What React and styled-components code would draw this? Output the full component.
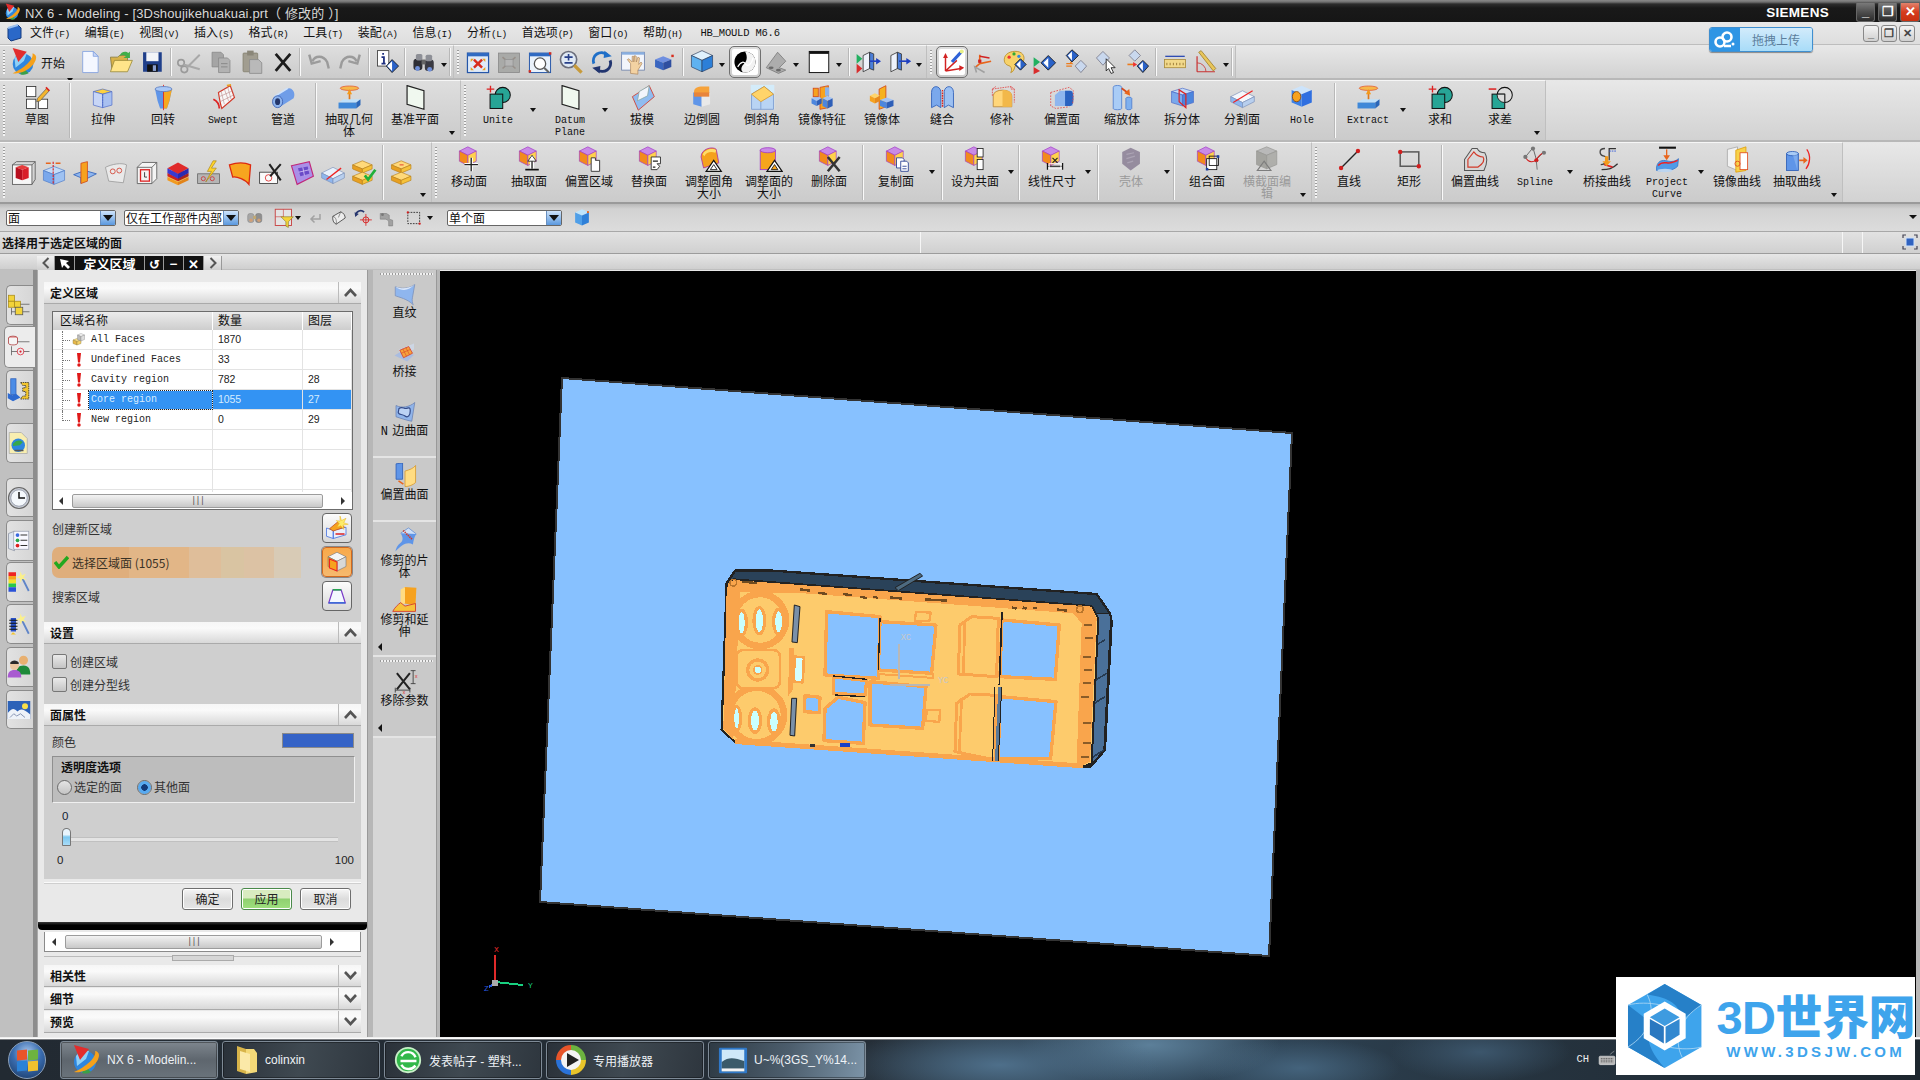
import React from "react";
import styled, { createGlobalStyle } from "styled-components";

const CJK = `"Noto Sans CJK SC", "Liberation Sans", sans-serif`;
const MONO = `"Liberation Mono", "Noto Sans CJK SC", monospace`;

const GlobalStyle = createGlobalStyle`
  html, body { margin: 0; padding: 0; background: #000; overflow: hidden; }
  * { box-sizing: border-box; }
`;

/* little isometric box used by most CAD icons */
const box = (x, y, w, h, d, t, l, r, st = "none") => (
  <g stroke={st} strokeWidth="0.8">
    <polygon points={`${x},${y} ${x + w},${y + d} ${x},${y + 2 * d} ${x - w},${y + d}`} fill={t} />
    <polygon points={`${x - w},${y + d} ${x},${y + 2 * d} ${x},${y + 2 * d + h} ${x - w},${y + d + h}`} fill={l} />
    <polygon points={`${x + w},${y + d} ${x},${y + 2 * d} ${x},${y + 2 * d + h} ${x + w},${y + d + h}`} fill={r} />
  </g>
);

const syncBase = box(14, 1, 10, 12, 5, "#c98be6", "#f28a1c", "#ffd24d", "#a33cc8");
const teal = "#27a596";

const icons = {
  nx: (<>
    <circle cx="16" cy="18" r="11" fill="#2e86de" />
    <path d="M7 12a11 11 0 0 1 13-5l-3 8-9 7z" fill="#8ed0f7" />
    <path d="M16 22l6 6a11 11 0 0 1-9 1z" fill="#3aa04a" />
    <path d="M5 28C16 30 30 20 30 11c0-2-2-4-4-4 2 6-9 16-21 21z" fill="#f5a11a" />
    <polygon points="5,1 20,5 11,16" fill="#e22d2d" />
  </>),
  doc: (<>
    <path d="M7 3h13l6 6v20H7z" fill="#f4f7ff" stroke="#7f9fe0" />
    <path d="M20 3v6h6z" fill="#c8d6f6" stroke="#7f9fe0" />
  </>),
  open: (<>
    <path d="M3 10h9l2-2h10v18H5z" fill="#d8b24a" stroke="#8a7a3a" />
    <path d="M3 28l5-14h22l-6 14z" fill="#ffe58a" stroke="#9a8a3a" />
    <path d="M14 9c2-6 8-7 11-4l2-2v8h-8l3-2c-2-2-5-2-8 0z" fill="#3fae4a" />
  </>),
  save: (<>
    <rect x="5" y="4" width="23" height="24" fill="#1f3f8a" />
    <rect x="9" y="4" width="15" height="11" fill="#f2f4f8" />
    <rect x="10" y="19" width="13" height="9" fill="#111" />
    <rect x="17" y="20" width="4" height="7" fill="#8aa0d0" />
  </>),
  cut: (<>
    <circle cx="9" cy="25" r="4" fill="none" stroke="#9a9a9a" strokeWidth="2" />
    <circle cx="5" cy="17" r="4" fill="none" stroke="#9a9a9a" strokeWidth="2" />
    <path d="M12 23L28 7M8 19l20 6" stroke="#a8a8a8" strokeWidth="2.5" />
  </>),
  copy: (<>
    <path d="M5 4h11l3 3v15H5z" fill="#a5a5a5" stroke="#8a8a8a" />
    <path d="M13 11h11l3 3v15H13z" fill="#b2b2b2" stroke="#8a8a8a" />
    <path d="M16 18h8M16 22h8" stroke="#808080" />
  </>),
  paste: (<>
    <rect x="5" y="5" width="18" height="23" rx="1" fill="#a19d90" stroke="#84806f" />
    <rect x="10" y="2" width="8" height="6" fill="#8a8678" />
    <path d="M13 13h11l4 4v13H13z" fill="#b9b9b9" stroke="#8a8a8a" />
  </>),
  del: <path d="M7 6l18 21M25 6L7 27" stroke="#1c1c1c" strokeWidth="3.4" fill="none" />,
  undo: <path d="M8 15C11 8 21 7 26 16l2 8M4 7l3 11 11-3" stroke="#9b9b9b" strokeWidth="3" fill="none" />,
  redo: <path d="M24 15C21 8 11 7 6 16l-2 8M28 7l-3 11-11-3" stroke="#9b9b9b" strokeWidth="3" fill="none" />,
  info: (<>
    <rect x="3" y="2" width="14" height="19" fill="#fff" stroke="#333" />
    <path d="M10 5v2M8 10h3v8M8 18h5" stroke="#1e2f80" strokeWidth="2.2" fill="none" />
    <polygon points="21,13 29,21 21,29 14,21" fill="#2a62c8" stroke="#111" />
    <polygon points="21,15 21,27 15,21" fill="#fff" />
  </>),
  bino: (<>
    <rect x="3" y="12" width="11" height="14" rx="4" fill="#2e2e34" />
    <rect x="17" y="13" width="11" height="14" rx="4" fill="#3a3a42" />
    <rect x="6" y="6" width="8" height="8" rx="2" fill="#8d8f96" />
    <rect x="18" y="7" width="8" height="8" rx="2" fill="#8d8f96" />
    <rect x="13" y="13" width="5" height="6" fill="#666" />
    <circle cx="8" cy="24" r="3" fill="#6f8fd8" /><circle cx="23" cy="25" r="3" fill="#6f8fd8" />
  </>),
  fit: (<>
    <rect x="3" y="5" width="26" height="24" fill="#dfeaf8" stroke="#2556a8" strokeWidth="1.5" />
    <rect x="3" y="5" width="26" height="4" fill="#2f6ac2" />
    <path d="M11 13l10 10M21 13L11 23" stroke="#d82c1c" strokeWidth="3" />
    <path d="M7 12l4 0-4 4zM25 12l-4 0 4 4zM7 26l4 0-4-4zM25 26l-4 0 4-4z" fill="#e8a021" />
  </>),
  fitGray: (<>
    <rect x="3" y="5" width="26" height="24" fill="#a9aaa8" stroke="#8a8a8a" />
    <path d="M8 10l16 14M24 10L8 24" stroke="#98908a" strokeWidth="2" />
    <rect x="11" y="13" width="10" height="8" fill="#b5b5b5" stroke="#949494" />
  </>),
  zoomWin: (<>
    <rect x="3" y="5" width="26" height="24" fill="#eaf2fb" stroke="#2556a8" strokeWidth="1.2" />
    <rect x="3" y="5" width="26" height="4" fill="#2f6ac2" />
    <circle cx="16" cy="18" r="7" fill="#fff" stroke="#555" strokeWidth="1.6" />
    <path d="M21 23l6 6" stroke="#666" strokeWidth="2.5" />
    <rect x="2" y="26" width="3" height="3" fill="#d82c1c" /><rect x="27" y="4" width="3" height="3" fill="#d82c1c" />
  </>),
  zoom: (<>
    <circle cx="13" cy="13" r="10" fill="#dfe9f5" stroke="#6c6f7c" strokeWidth="2" />
    <path d="M8 10h10M13 6v8M8 17h10" stroke="#28408a" strokeWidth="2" />
    <path d="M20 20l9 9" stroke="#c79a3a" strokeWidth="4" />
  </>),
  rot: (<>
    <path d="M6 18A10 10 0 0 1 22 7" stroke="#1f6fc8" strokeWidth="3.6" fill="none" />
    <path d="M26 14A10 10 0 0 1 10 25" stroke="#22356f" strokeWidth="3.6" fill="none" />
    <polygon points="19,2 28,9 18,11" fill="#1f6fc8" /><polygon points="13,30 4,23 14,21" fill="#22356f" />
  </>),
  pan: (<>
    <rect x="2" y="4" width="28" height="22" fill="#f2f5fb" stroke="#6a7ea8" />
    <rect x="2" y="4" width="28" height="3" fill="#88aee0" />
    <path d="M13 30V18l-4-5 2-1 4 4V9h2v7l1-8 2 1v7l2-6 2 1-1 8 3-3 1 2-5 8v5z" fill="#f3d2a2" stroke="#a9825a" strokeWidth=".8" />
  </>),
  viewCam: (<>
    {box(15, 9, 10, 9, 4, "#6f8fe0", "#3a66c0", "#2f4fa0")}
    <rect x="25" y="7" width="3" height="3" fill="#d82c1c" />
  </>),
  viewCube: box(16, 2, 13, 14, 6, "#dff1fd", "#5fb2f0", "#2c7fd8", "#2a3a5a"),
  shaded: (<>
    <circle cx="16" cy="16" r="13" fill="#000" />
    <path d="M16 3a13 13 0 0 1 0 26c-5 0-6-6-2-10 4-3 6-9 2-16z" fill="#f2f2f2" />
    <path d="M7 22c4-7 8-7 10-3 3 3 7 0 9-8" stroke="#fff" strokeWidth="1.5" fill="none" />
  </>),
  bracket: (<>
    <path d="M4 23L18 4l10 11-8 8 8 3-9 4z" fill="#adadad" stroke="#7a7a7a" />
    <ellipse cx="19" cy="26" rx="3" ry="1.6" fill="#6a6a6a" /><ellipse cx="10" cy="23" rx="3" ry="1.6" fill="#6a6a6a" />
  </>),
  white: (<>
    <rect x="4" y="3" width="24" height="26" fill="#fff" stroke="#111" strokeWidth="1.2" />
    <rect x="4" y="3" width="24" height="3" fill="#111" />
  </>),
  sideA: (<>
    <path d="M10 8l8-4v20l-8 4z" fill="#eef2fb" stroke="#333" /><path d="M18 4l5 2v20l-5-2z" fill="#4b7ed8" stroke="#333" />
    <polygon points="2,6 9,12 2,18" fill="#22b060" /><polygon points="2,18 9,24 2,30" fill="#d82c2c" />
    <path d="M18 15h9" stroke="#2040c0" strokeWidth="2" /><polygon points="26,11 32,15 26,19" fill="#2040c0" />
  </>),
  sideB: (<>
    <path d="M6 8l8-4v20l-8 4z" fill="#eef2fb" stroke="#333" /><path d="M14 4l5 2v20l-5-2z" fill="#4b7ed8" stroke="#333" />
    <path d="M16 15h10" stroke="#2040c0" strokeWidth="2" /><polygon points="25,11 31,15 25,19" fill="#2040c0" />
  </>),
  wcs: (<>
    <path d="M8 27V10M8 27l19-3M8 27l14-13" stroke="#d22222" strokeWidth="1.8" fill="none" />
    <polygon points="5,11 8,5 11,11" fill="#d22222" /><polygon points="25,20 31,23 25,27" fill="#d22222" />
    <path d="M16 16L27 4" stroke="#2f62d8" strokeWidth="4" /><circle cx="28" cy="3" r="2.5" fill="#e8f08a" />
  </>),
  wcsB: (<>
    <path d="M12 18V7M12 18l14-3M12 18l-6 5" stroke="#e8651c" strokeWidth="2" fill="none" />
    <path d="M12 9l12 2" stroke="#d22222" strokeWidth="2" />
    <path d="M8 29l-2-7 12 7" stroke="#a0a0a0" strokeWidth="2" fill="none" />
    <rect x="10" y="13" width="4" height="4" fill="#d22222" />
  </>),
  palette: (<>
    <path d="M4 13C4 6 12 2 20 3s10 8 7 13-9 2-10 6-2 6-5 7c2-3 1-6-1-8-3-1-7-2-7-8z" fill="#f7d26a" stroke="#b68a22" />
    <circle cx="10" cy="10" r="2" fill="#e33" /><circle cx="16" cy="6" r="2" fill="#3a3" /><circle cx="22" cy="9" r="2" fill="#38d" />
    <polygon points="24,12 31,19 24,26 17,19" fill="#2a62c8" stroke="#111" /><polygon points="24,14 24,24 19,19" fill="#fff" />
  </>),
  wcsC: (<>
    <polygon points="2,10 10,16 2,22" fill="#22b060" /><polygon points="2,22 10,27 2,31" fill="#d82c2c" />
    <polygon points="20,8 29,17 20,26 11,17" fill="#2a62c8" stroke="#111" /><polygon points="20,11 20,23 14,17" fill="#fff" />
  </>),
  wcsD: (<>
    <polygon points="11,1 19,8 11,16 4,8" fill="#2a62c8" stroke="#111" /><polygon points="11,3 11,14 6,8" fill="#fff" />
    <polygon points="22,14 29,21 22,29 15,21" fill="#c9d8ee" stroke="#778" />
    <path d="M4 18h7l-2-2M4 21h7" stroke="#ec7b1c" strokeWidth="1.6" fill="none" />
  </>),
  wcsE: (<>
    <polygon points="11,3 19,11 11,20 3,11" fill="#c9d8ee" stroke="#778" />
    <path d="M15 12l0 15 3-3 3 6 3-1-3-6 5 0z" fill="#fff" stroke="#111" />
  </>),
  wcsF: (<>
    <polygon points="12,1 19,8 12,15 5,8" fill="#c9d8ee" stroke="#778" />
    <polygon points="22,14 29,21 22,29 15,21" fill="#2a62c8" stroke="#111" /><polygon points="22,16 22,27 17,21" fill="#fff" />
    <path d="M3 19h9" stroke="#ec7b1c" strokeWidth="2" /><polygon points="10,16 15,19 10,22" fill="#e33" />
  </>),
  ruler: (<>
    <rect x="3" y="13" width="26" height="10" fill="#f2d98a" stroke="#a98a3a" />
    <path d="M6 17v3M10 17v3M14 17v3M18 17v3M22 17v3M26 17v3" stroke="#8a6a2a" />
    <path d="M4 9h24" stroke="#2140b0" strokeWidth="1.5" />
  </>),
  angle: (<>
    <path d="M5 28V9M5 28h22" stroke="#c83232" strokeWidth="1.5" fill="none" />
    <path d="M5 17a11 11 0 0 1 11 11" stroke="#c83232" fill="none" />
    <path d="M7 4l3-2 18 22-3 3z" fill="#e8c65a" stroke="#a07f2a" />
  </>),
  sketch: (<>
    <rect x="3" y="3" width="11" height="12" fill="#fff" stroke="#333" /><rect x="3" y="18" width="11" height="11" fill="#fff" stroke="#333" />
    <rect x="17" y="18" width="11" height="11" fill="#fff" stroke="#333" />
    <path d="M16 17L27 5l3 3-11 12-4 1z" fill="#f4b52e" stroke="#555" strokeWidth=".8" />
    <path d="M26 4l4 4" stroke="#d22" strokeWidth="2" />
  </>),
  extrude: (<>
    {box(15, 6, 11, 16, 3, "#ffd23f", "#c8d6f6", "#a8c0f0", "#4a68c8")}
    <path d="M15 12v16" stroke="#4a68c8" strokeDasharray="2 1" />
  </>),
  revolve: (<>
    <path d="M6 6h20l-3 14-3 9h-8l-3-9z" fill="#5f95e8" />
    <path d="M16 6h10l-3 14-3 9h-4z" fill="#f6a81f" />
    <path d="M16 1v30" stroke="#d22" strokeWidth="1" />
    <ellipse cx="16" cy="6" rx="10" ry="3" fill="#a9c8f7" stroke="#5f7fc0" />
  </>),
  swept: (<>
    <path d="M10 10L24 2l5 14-15 13c-2-6-3-13-4-19z" fill="#f8f8f8" stroke="#d23a2a" strokeWidth="1.4" />
    <path d="M13 8l4 16M17 6l5 14M21 4l4 14M11 15l16-7M12 21l16-8" stroke="#b88" strokeWidth=".7" />
    <path d="M4 18c4 2 7 6 7 11" stroke="#d22" strokeWidth="2" fill="none" />
    <path d="M20 2l5-1" stroke="#e8a021" strokeWidth="2" />
  </>),
  tube: (<>
    <path d="M4 16L20 6a6 8 0 0 1 8 11L12 27z" fill="#6f9de8" />
    <path d="M5 15L21 5" stroke="#cfe2fb" strokeWidth="2" />
    <ellipse cx="9" cy="21" rx="6" ry="7" fill="#8fb5ee" stroke="#3a5fb0" />
    <ellipse cx="9" cy="21" rx="3" ry="4" fill="#24366a" />
  </>),
  extract: (<>
    <ellipse cx="16" cy="5" rx="11" ry="2.6" fill="#f6b84a" stroke="#e4623a" />
    <path d="M16 20V8" stroke="#e07a1c" strokeWidth="2" /><polygon points="13,12 16,6 19,12" fill="#f39a1c" />
    <polygon points="3,22 9,18 29,18 24,22" fill="#bfe0fa" />
    <polygon points="3,22 24,22 24,29 3,29" fill="#3f88d8" /><polygon points="24,22 29,18 29,25 24,29" fill="#2a66b8" />
  </>),
  datum: <polygon points="6,2 26,8 26,30 6,24" fill="#f0f8ef" stroke="#222" strokeWidth="1.4" />,
  unite: (<>
    <path d="M2 6h9M6.500 2v8" stroke="#d22" strokeWidth="1.6" />
    <circle cx="21" cy="13" r="9" fill={teal} stroke="#111" strokeWidth="1.2" />
    <rect x="6" y="12" width="15" height="17" fill={teal} stroke="#111" strokeWidth="1.2" />
  </>),
  subtract: (<>
    <path d="M2 6h9" stroke="#d22" strokeWidth="1.8" />
    <circle cx="21" cy="13" r="9" fill="#dcdcdc" stroke="#111" strokeWidth="1.2" />
    <rect x="6" y="12" width="15" height="17" fill={teal} stroke="#111" strokeWidth="1.2" />
    <path d="M12 13a9 9 0 0 0 9 9v-10h-9z" fill="#dcdcdc" stroke="#111" />
  </>),
  draft: (<>
    <path d="M4 15L24 2l6 13-19 16z" fill="#8fbcf0" stroke="#d23a2a" />
    <polygon points="12,9 24,2 22,14 10,20" fill="#f2f5fb" stroke="#8aa" />
  </>),
  blend: (<>
    <path d="M6 9c0-4 4-6 10-6h8v10H6z" fill="#f6a23a" />
    {box(15, 7, 10, 14, 3, "#f6a23a", "#5f95e8", "#e9e9e9")}
    <rect x="6" y="10" width="18" height="5" fill="#e8843a" />
  </>),
  chamfer: (<>
    <rect x="2" y="1" width="28" height="29" fill="#d4ecfa" />
    <polygon points="3,12 18,3 29,12 29,30 3,30" fill="#b9d4f4" stroke="#7a9ad0" />
    <polygon points="3,12 18,3 29,12 14,21" fill="#ffd46a" stroke="#d89a30" />
    <path d="M14 21v9" stroke="#7a9ad0" />
  </>),
  mirrorF: (<>
    <path d="M13 4l10-2v26l-10 2z" fill="#f6a21f" stroke="#d24a1a" />
    {box(9, 14, 6, 6, 3, "#a5c4f4", "#4c86de", "#2e5fb8")}
    {box(22, 14, 6, 9, 3, "#a5c4f4", "#4c86de", "#2e5fb8")}
    <rect x="5" y="5" width="6" height="10" fill="#f6a21f" stroke="#d24a1a" /><rect x="19" y="4" width="5" height="10" fill="#8ab2ec" />
  </>),
  mirrorB: (<>
    <path d="M12 6l8-4v25l-8 3z" fill="#f6b21f" stroke="#d24a1a" />
    {box(7, 11, 6, 6, 3, "#ffd46a", "#f6a21f", "#e88a1c")}
    {box(21, 16, 8, 7, 3, "#a5c4f4", "#4c86de", "#2e5fb8")}
  </>),
  sew: (<>
    <path d="M3 28V10c0-9 10-9 11-1v19l-5-3z" fill="#7aa8ec" stroke="#2e5fb8" />
    <path d="M29 28V10c0-9-10-9-11-1v19l5-3z" fill="#9cc0f2" stroke="#2e5fb8" />
    <path d="M16 7v20" stroke="#d22" strokeDasharray="2 1" strokeWidth="1.6" />
  </>),
  patch: (<>
    <path d="M5 27V14C5 5 27 5 27 14v13z" fill="#ffd67a" stroke="#b8863a" />
    <path d="M16 27V7c8 0 11 3 11 7v13z" fill="#f2b84a" />
    <path d="M4 6l22-3 4 3v16M4 6v8M8 3l-4 3M26 3v3l4 0" stroke="#e04a4a" strokeDasharray="2 1" fill="none" />
  </>),
  offsetF: (<>
    <path d="M7 13l6-5h15v18H7z" fill="#8fb6ee" stroke="none" />
    <path d="M19 8h6c3 0 4 4 4 9s-1 9-4 9h-6z" fill="#2a62c0" />
    <path d="M2 10l22-6 5 4-1 16M2 10l0 16 6 3 16-2" stroke="#e04a4a" strokeDasharray="2 1.500" fill="none" />
  </>),
  scale: (<>
    <path d="M5 4c0-3 10-3 10 0v25c0 2-10 2-10 0z" fill="#a9ccf6" stroke="#4f7fd0" />
    <path d="M20 17c0-2 7-2 7 0v12c0 2-7 2-7 0z" fill="#7fb0ef" stroke="#4f7fd0" />
    <path d="M15 5l8 6" stroke="#d64a1c" strokeWidth="2" /><polygon points="25,14 18,11 24,6" fill="#e8651c" />
  </>),
  splitB: (<>
    {box(16, 5, 13, 13, 4, "#c4dcf8", "#7aa8ec", "#4c86de", "#4a68c8")}
    <path d="M12 7v14l8 7V12z" fill="none" stroke="#d22" strokeWidth="1.4" />
  </>),
  splitF: (<>
    {box(16, 8, 14, 6, 7, "#f4f7fc", "#8fb6ee", "#b8cfee", "#7a8fb8")}
    <path d="M5 22L28 8" stroke="#e22" strokeWidth="1.4" />
  </>),
  hole: (<>
    {box(15, 2, 12, 15, 5, "#cde4fb", "#f4f8ff", "#2f6fe0")}
    <polygon points="3,7 15,12 15,27 3,22" fill="#3d80e4" />
    <ellipse cx="9" cy="15" rx="5" ry="6" fill="#f7a21f" stroke="#8a4a10" />
  </>),
  block: (<>
    <rect x="3" y="6" width="24" height="24" fill="#f6f6f6" stroke="#555" />
    <path d="M3 6l5-4h23v22l-4 6M27 6l4-4" fill="none" stroke="#555" />
    {box(15, 6, 8, 13, 3, "#e63b3b", "#b80f1f", "#d91f2a")}
  </>),
  blueX: (<>
    {box(16, 8, 13, 12, 5, "#c4dcf8", "#7aa8ec", "#9fc2f2", "#4a78c8")}
    <path d="M15 2v27" stroke="#d22" strokeWidth="1.4" strokeDasharray="3 1" />
    <path d="M6 4h6M24 4h-6" stroke="#e8651c" strokeWidth="1.6" />
  </>),
  cross: (<>
    <path d="M2 18l14-5 14 4-14 7z" fill="#8fb6ee" stroke="#2e5fb8" /><path d="M10 22v7l8-3v-4z" fill="#4c86de" />
    <path d="M11 4l8-2v24l-8 3z" fill="#f6a21f" stroke="#d24a1a" />
  </>),
  curveS: (<>
    <path d="M3 9c8-4 20-6 26-3l-4 22-18-2z" fill="#e9e9e9" stroke="#9a9a9a" />
    <circle cx="12" cy="14" r="3" fill="none" stroke="#d23a2a" /><circle cx="20" cy="13" r="3" fill="none" stroke="#d23a2a" />
  </>),
  frame: (<>
    <path d="M4 9l6-6h18v20l-6 6H4z" fill="#f4f4f4" stroke="#555" /><path d="M4 9h18v20M22 9l6-6" fill="none" stroke="#555" />
    <rect x="8" y="12" width="11" height="14" fill="none" stroke="#d22" strokeWidth="1.6" />
    <path d="M13 15v6h3" stroke="#222" fill="none" />
  </>),
  layers: (<>
    {box(16, 15, 13, 4, 6, "#f7c23a", "#f29a1f", "#e2841a")}
    {box(16, 10, 13, 4, 6, "#e84a3a", "#cc2222", "#a8241f")}
    {box(16, 3, 13, 6, 7, "#e02a2a", "#3a3ad0", "#2a2ab0")}
  </>),
  spark: (<>
    <rect x="2" y="17" width="27" height="12" fill="#b5b5b5" stroke="#666" />
    <circle cx="9" cy="23" r="2.500" fill="none" stroke="#c33" /><circle cx="20" cy="23" r="2.500" fill="none" stroke="#c33" />
    <polygon points="21,1 14,14 19,14 12,27 25,10 19,10 25,1" fill="#ffd42a" stroke="#a07a10" strokeWidth=".7" />
  </>),
  flag: <path d="M3 6C12 3 22 3 29 6l-2 24c-4-6-15-10-20-9z" fill="#f7a51f" stroke="#dd2a10" strokeWidth="1.6" />,
  trimX: (<>
    <rect x="2" y="15" width="22" height="14" fill="#fafafa" stroke="#333" />
    <circle cx="13" cy="22" r="4" fill="none" stroke="#d22" />
    <path d="M14 5l14 20M28 5L15 20" stroke="#222" strokeWidth="2.5" />
  </>),
  meshP: (<>
    <path d="M3 7l22-5 5 18-20 10z" fill="#a98fe8" stroke="#c0287a" strokeWidth="1.4" />
    <path d="M11 10l12-2 2 9-11 3z" fill="#6a4ac8" />
    <path d="M17 9l2 10M12 15l13-3" stroke="#d8c8f8" />
  </>),
  split2: (<>
    {box(16, 9, 14, 6, 7, "#e8f0fb", "#8fb6ee", "#b8cfee", "#7a8fb8")}
    <path d="M8 24L26 10" stroke="#e22" strokeWidth="1.6" />
  </>),
  stack: (<>
    {box(15, 1, 12, 5, 5, "#ffd97a", "#e8a021", "#f6c23a", "#b8801a")}
    {box(15, 15, 12, 5, 5, "#ffd97a", "#e8a021", "#f6c23a", "#b8801a")}
    <path d="M13 6h5" stroke="#d22" />
  </>),
  stackOk: (<>
    {box(14, 1, 12, 5, 5, "#ffd97a", "#e8a021", "#f6c23a", "#b8801a")}
    {box(14, 15, 12, 5, 5, "#ffd97a", "#e8a021", "#f6c23a", "#b8801a")}
    <path d="M17 19l4 5 9-12" stroke="#1fb03a" strokeWidth="3.4" fill="none" />
  </>),
  move: (<>{syncBase}<path d="M18 14v16M10 22h16" stroke="#fff" strokeWidth="4" /><path d="M18 14v16M10 22h16" stroke="#222" strokeWidth="1.6" /></>),
  pull: (<>{syncBase}<path d="M19 12v15" stroke="#fff" strokeWidth="5" /><path d="M19 12v15" stroke="#222" strokeWidth="1.6" /><polygon points="14,18 19,11 24,18" fill="#fff" stroke="#222" /><path d="M11 27h16v2H11z" fill="#111" /></>),
  offsetR: (<>{syncBase}<path d="M18 14h5v3h5v13H18z" fill="#fff" stroke="#222" /></>),
  replace: (<>{syncBase}<path d="M18 13h11v8h-4l3 3-3 4h-7z" fill="#fff" stroke="#222" /><path d="M20 18h6M20 25h3" stroke="#222" strokeWidth="1.6" /></>),
  resizeB: (<>
    <path d="M6 13C6 3 20 0 24 4l3 16-18 6z" fill="#f5a11c" stroke="#b1339f" />
    <path d="M8 10C10 4 20 2 24 5l-1 3C17 6 12 8 10 12z" fill="#ffdd6a" />
    <polygon points="21,17 30,30 12,30" fill="#fff" stroke="#111" strokeWidth="1.4" /><polygon points="21,22 25,28 17,28" fill="#fff" stroke="#111" />
  </>),
  resizeC: (<>
    <rect x="5" y="5" width="18" height="23" fill="#f6a51c" stroke="#a33cc8" />
    <ellipse cx="14" cy="5" rx="9" ry="3" fill="#c98be6" stroke="#a33cc8" />
    <polygon points="22,17 31,30 13,30" fill="#fff" stroke="#111" strokeWidth="1.4" /><polygon points="22,22 26,28 18,28" fill="#f6a51c" stroke="#111" />
  </>),
  delF: (<>{syncBase}<path d="M14 13l14 17M28 13L14 30" stroke="#333" strokeWidth="3" /></>),
  copyF: (<>{syncBase}<path d="M16 14h7l2 2v10h-9z" fill="#fff" stroke="#223a90" /><path d="M21 18h7l2 2v10h-9z" fill="#fff" stroke="#223a90" /><path d="M23 24h5M23 27h5" stroke="#223a90" /></>),
  copl: (<>{syncBase}<rect x="18" y="3" width="7" height="10" fill="#fff" stroke="#222" /><rect x="18" y="16" width="7" height="12" fill="#fff" stroke="#222" /></>),
  linDim: (<>{syncBase}<path d="M10 24h18M10 20v8M28 20v8" stroke="#111" strokeWidth="1.4" /><path d="M16 14l6 6M22 14l-6 6" stroke="#222" strokeWidth="1.4" /><rect x="12" y="21" width="14" height="6" fill="none" stroke="#fff" /></>),
  shell: (<>
    <polygon points="15,2 26,7 26,21 15,29 5,21 5,7" fill="#8a7f95" />
    <path d="M10 10l9-2M10 15l10-3M11 20l7-2" stroke="#a49bae" strokeWidth="1.4" />
  </>),
  combine: (<>{syncBase}<rect x="15" y="15" width="12" height="13" fill="#fff" stroke="#111" /><rect x="18" y="12" width="11" height="11" fill="none" stroke="#111" /><rect x="14" y="26" width="3" height="3" fill="#1e3fa0" /><rect x="27" y="11" width="3" height="3" fill="#1e3fa0" /></>),
  section: (<>
    {box(15, 1, 12, 16, 5, "#b4b4b4", "#9b9b96", "#a8a8a4", "#8a8a86")}
    <polygon points="12,18 20,29 4,29" fill="none" stroke="#6e6e6e" strokeWidth="1.4" />
  </>),
  line: (<>
    <path d="M6 26L26 6" stroke="#222" strokeWidth="1.6" />
    <circle cx="26" cy="6" r="2.600" fill="#d21e1e" /><circle cx="6" cy="26" r="2.600" fill="#d21e1e" />
  </>),
  rect: (<>
    <rect x="5" y="7" width="22" height="17" fill="none" stroke="#5a5a5a" strokeWidth="1.8" />
    <circle cx="5" cy="7" r="2.600" fill="#d21e1e" /><circle cx="27" cy="24" r="2.600" fill="#d21e1e" />
  </>),
  offC: (<>
    <path d="M3 16L12 3h6c2 4 6 5 9 5 3 5 3 13-1 21H3z" fill="none" stroke="#555" strokeWidth="1.2" />
    <path d="M7 16L14 7c3 4 7 6 11 6 2 3 1 7-6 12H7z" fill="none" stroke="#d23a2a" strokeWidth="1.4" />
  </>),
  spline: (<>
    <path d="M4 13L13 2l4 14 8-8" fill="none" stroke="#555" strokeWidth="1" />
    <path d="M4 13c4 8 11 6 13 3s5-7 9-8" fill="none" stroke="#d21e1e" strokeWidth="1.2" />
    <circle cx="4" cy="13" r="2.500" fill="#777" /><circle cx="13" cy="3" r="2.500" fill="#777" /><circle cx="17" cy="17" r="2.500" fill="#d21e1e" /><circle cx="26" cy="8" r="2.500" fill="#777" />
    <path d="M17 18l1 10" stroke="#666" strokeWidth="1" />
  </>),
  bridge: (<>
    <path d="M13 3c-8 0-7 8-1 9s3 10-4 10" fill="none" stroke="#444" strokeWidth="1.6" />
    <path d="M26 3h-8v14M9 28c8 0 13-1 19-7" stroke="#333" strokeWidth="1.5" fill="none" />
    <path d="M18 6h8" stroke="#2a52d8" strokeDasharray="2 1" />
    <path d="M12 22l10 3" stroke="#d22" strokeWidth="2" />
    <polygon points="13,12 17,12 17,18 20,18 15,24 10,18 13,18" fill="#f39a1c" />
  </>),
  project: (<>
    <path d="M6 2h20" stroke="#111" strokeWidth="2.500" />
    <path d="M15 4v9" stroke="#e8651c" strokeWidth="1.6" /><polygon points="11,11 19,11 15,17" fill="#e8651c" />
    <path d="M3 25c2-10 10-8 14-7s9 0 12-3l-1 9c-6 6-16 6-25 5z" fill="#4f9be8" stroke="#3a78c8" />
    <path d="M5 23c5-6 10-2 14-3s5-1 9-3" stroke="#e22" strokeWidth="1.8" fill="none" />
    <ellipse cx="13" cy="29" rx="9" ry="2" fill="#bcd5f0" />
  </>),
  mirrorC: (<>
    <path d="M4 4l12-3v28L4 24z" fill="#f2f2f2" stroke="#aaa" />
    <path d="M14 5l12-4v28l-12 2z" fill="#f8d24a" stroke="#e0a010" />
    <rect x="19" y="8" width="9" height="20" fill="#fff" stroke="#e04a1c" />
    <circle cx="16" cy="21" r="3" fill="none" stroke="#e04a1c" />
  </>),
  extC: (<>
    <rect x="3" y="9" width="14" height="20" fill="#5f95e8" stroke="#2e5fb8" />
    <ellipse cx="10" cy="9" rx="7" ry="2.500" fill="#a9ccf6" stroke="#2e5fb8" />
    <path d="M10 9h6v20" fill="#a9ccf6" opacity=".4" />
    <path d="M18 17h7" stroke="#e8651c" strokeWidth="2" /><polygon points="23,13 28,17 23,21" fill="#e8651c" />
    <path d="M27 4c5 7 4 17-1 23" stroke="#e22" strokeWidth="1.500" fill="none" />
  </>),
  cubeSel: (<>
    {box(16, 2, 11, 16, 5, "#bfe4fb", "#4f9fe8", "#2f80d8")}
    <rect x="24" y="5" width="3" height="3" fill="#e8651c" />
  </>),
  selGray: (<>
    <rect x="3" y="8" width="11" height="16" rx="4" fill="#a6a6a6" stroke="#8a8a8a" />
    <rect x="17" y="8" width="11" height="16" rx="4" fill="#8f8f8f" stroke="#7a7a7a" />
    <rect x="13" y="12" width="5" height="6" fill="#c2a870" />
    <circle cx="9" cy="20" r="3" fill="#d0a078" /><circle cx="23" cy="20" r="3" fill="#d0a078" />
  </>),
  filter: (<>
    <rect x="2" y="2" width="26" height="26" fill="#e4e4e4" stroke="#c84444" strokeWidth="1.5" />
    <path d="M15 2v12M2 14h14" stroke="#c84444" />
    <polygon points="11,14 31,14 23,22 23,31 19,29 19,22" fill="#f4d43a" stroke="#8a7a2a" />
  </>),
  selBack: <path d="M26 8v10H9M15 11l-7 7 7 7" stroke="#a2a2a2" strokeWidth="3" fill="none" />,
  selRoll: (<>
    <path d="M5 13L19 5c5 2 8 6 8 11L11 27C6 25 4 19 5 13z" fill="#ececec" stroke="#444" strokeWidth="1.5" />
    <path d="M5 13c6 1 7 9 6 14M19 5l-4 10" stroke="#444" fill="none" />
  </>),
  selCross: (<>
    <path d="M3 12c1-7 9-10 14-5" stroke="#27366e" strokeWidth="3" fill="none" />
    <polygon points="1,7 8,10 2,15" fill="#27366e" />
    <circle cx="20" cy="20" r="5" fill="none" stroke="#d62222" strokeWidth="1.6" />
    <path d="M20 10v20M10 20h20" stroke="#d62222" strokeWidth="1.4" />
  </>),
  selGrayPipe: (<>
    <path d="M4 8h11l5 3v7l6 2v10h-7V21l-5-3H4z" fill="#a2a2a2" stroke="#7a7a7a" />
    <circle cx="8" cy="10" r="2.500" fill="#777" />
  </>),
  rectSel: (<>
    <rect x="5" y="6" width="21" height="20" fill="none" stroke="#222" strokeWidth="1.500" strokeDasharray="3 2" />
    <circle cx="5" cy="6" r="2" fill="#d21e1e" /><circle cx="26" cy="26" r="2" fill="#d21e1e" />
  </>),
  tree1: (<>
    <rect x="2" y="3" width="8" height="8" fill="#f2d33a" stroke="#a88a1a" /><rect x="2" y="11" width="8" height="8" fill="#f2d33a" stroke="#a88a1a" /><rect x="10" y="11" width="8" height="8" fill="#f2d33a" stroke="#a88a1a" />
    <path d="M18 15h12M6 20v9" stroke="#555" />
    <rect x="11" y="19" width="10" height="10" fill="#f2d33a" stroke="#555" /><path d="M6 25h5M21 25h9" stroke="#555" />
  </>),
  tree2: (<>
    <ellipse cx="8" cy="4" rx="6" ry="2.500" fill="#e8a8a8" stroke="#a33" /><path d="M2 4v7c0 3 12 3 12 0V4" fill="#f4f4f4" stroke="#a33" />
    <path d="M14 9h16M6 15v12M6 22h8M22 22h8" stroke="#555" />
    <circle cx="18" cy="22" r="4.500" fill="none" stroke="#d23" /><circle cx="18" cy="22" r="1.500" fill="#d23" />
  </>),
  bolt: (<>
    <rect x="5" y="1" width="7" height="21" fill="#4c8ce6" stroke="#2e5fb8" />
    <path d="M1 20l6 3 5-2 6 5-10 5-7-4z" fill="#2e6ad0" />
    <path d="M18 6h11v22H18l3-4h4v-6h-4v-5h4V10h-4z" fill="#f2c52e" stroke="#222" strokeDasharray="2 1" />
  </>),
  webDoc: (<>
    <path d="M3 2h16l8 8v20H3z" fill="#f8eeb0" stroke="#a8a8a8" />
    <circle cx="15" cy="19" r="9" fill="#2e86de" /><path d="M8 17c4-5 10-6 13-2l-4 4-9 1z" fill="#38a84a" />
    <path d="M10 26h12" stroke="#555" strokeWidth="2" />
  </>),
  clock: (<>
    <circle cx="16" cy="16" r="14" fill="#c8ccd4" stroke="#666" strokeWidth="1.5" />
    <circle cx="16" cy="16" r="11" fill="#f4f8fc" stroke="#8a90a0" />
    <path d="M16 8v8h8" stroke="#111" strokeWidth="2" fill="none" />
  </>),
  checklist: (<>
    <path d="M2 6l8-3v26l-8-3z" fill="#dfe6f0" stroke="#8a90a0" />
    <rect x="9" y="3" width="20" height="24" fill="#f8f8ff" stroke="#9aa0b0" />
    <circle cx="14" cy="8" r="2.500" fill="#3a6ae0" /><circle cx="14" cy="15" r="2.500" fill="#2aa84a" /><circle cx="14" cy="22" r="2.500" fill="#d22" />
    <path d="M18 8h9M18 15h9M18 22h9" stroke="#333" strokeWidth="1.6" />
  </>),
  rainbow: (<>
    <rect x="2" y="3" width="10" height="5" fill="#e22" /><rect x="2" y="8" width="10" height="5" fill="#f6a21f" /><rect x="2" y="13" width="10" height="5" fill="#f2e22a" />
    <rect x="2" y="18" width="10" height="5" fill="#2ac84a" /><rect x="2" y="23" width="10" height="6" fill="#2a52d8" />
    <path d="M19 8l10 20" stroke="#5f85c8" strokeWidth="2.500" />
    <path d="M18 2l2 5 5-2-3 5 4 3-6-1-2 5-1-6-5-1 5-2z" fill="#fbf08a" />
  </>),
  wand: (<>
    <path d="M5 8h7v18H5z" fill="#2a52c8" /><path d="M3 11h11M3 15h11M3 19h11M3 23h11" stroke="#111" strokeWidth="1.4" />
    <path d="M8 27l4 3-7 0z" fill="#f2c52e" /><path d="M19 9l10 20" stroke="#5f85c8" strokeWidth="2.500" />
    <path d="M18 2l2 5 5-2-3 5 4 3-6-1-2 5-1-6-5-1 5-2z" fill="#fbf08a" />
  </>),
  users: (<>
    <circle cx="22" cy="7" r="6" fill="#e8b070" /><path d="M12 26c0-8 3-12 10-12s9 5 9 12z" fill="#1f8a3a" />
    <circle cx="10" cy="14" r="6" fill="#ecc7a0" /><path d="M4 11c2-5 10-5 12 0l-1 1H5z" fill="#2a2a2a" />
    <path d="M1 30c0-7 3-10 9-10s9 3 9 10z" fill="#a85ad0" />
  </>),
  land: (<>
    <rect x="1" y="4" width="30" height="24" fill="#2c62b8" />
    <circle cx="24" cy="11" r="4" fill="#f8e04a" />
    <path d="M1 28V20c6-8 9-6 13-2 4-4 8-4 17 4v6z" fill="#eef2f8" />
    <path d="M4 26l5-5 4 3 5-3 6 5" stroke="#6a7aa0" fill="none" />
  </>),
  ruled: (<>
    <path d="M3 5c8 3 18 3 26-3l-3 17c-1 4 0 8 1 10-8-8-19-10-24-12z" fill="#8fb6ee" stroke="#7a8fb8" />
    <path d="M3 5c8 3 18 3 26-3-8 8-16 10-26 3z" fill="#dbe7fa" />
  </>),
  bridgeS: (<>
    <path d="M8 10L28 2v8L8 19z" fill="#cdd6e4" /><path d="M2 18l8-5 18 4-9 9z" fill="#a9bce0" />
    <path d="M9 11l12-5 5 9-12 6z" fill="#f6a23a" stroke="#d23a2a" />
    <path d="M13 9l5 10M17 7l5 10M11 15l12-5" stroke="#d23a2a" strokeWidth=".7" />
  </>),
  nsided: (<>
    <path d="M4 6c8 4 18 2 25-4l-4 25c-6-1-15-4-21-6z" fill="#90b4ea" stroke="#6a80b0" />
    <path d="M8 10c4-3 6 0 9 0s6-3 6 3-3 10-7 7-9-1-9-5z" fill="#bcd2f4" stroke="#334a88" strokeWidth="1.6" />
  </>),
  offS: (<>
    <path d="M5 1l8-1v20H5z" fill="#5f95e8" stroke="#2e5fb8" />
    <path d="M16 10c6-2 10-3 13-7v21c-3 3-8 5-13 5z" fill="#ffdc82" stroke="#d89a30" />
    <path d="M8 22l6 4" stroke="#e8651c" strokeWidth="2" />
  </>),
  trimS: (<>
    <path d="M5 28c7-8 14-12 20-8 1-6 2-10 4-12l-9-7-9 6c3 5 3 8 0 11-4 3-5 6-6 10z" fill="#5f95e8" />
    <path d="M11 7l9-6 9 7" fill="#cfe0f7" stroke="#7a9ad0" />
    <path d="M14 4l10 10" stroke="#d23a2a" strokeDasharray="1.500 1" strokeWidth="2" />
  </>),
  trimE: (<>
    <polygon points="15,1 29,2 28,22 15,20" fill="#f6a21f" />
    <polygon points="11,4 16,1 16,20 11,22" fill="#ffdc82" />
    <path d="M2 29c2-4 6-8 9-10l5 4 12-3v9z" fill="#f7c23a" stroke="#d23a2a" />
  </>),
  removeP: (<>
    <path d="M6 5l16 20M22 5L6 25" stroke="#222" strokeWidth="2.500" />
    <path d="M26 2v16M23 2h6M23 18h6M4 26h18M4 23v6M22 23v6" stroke="#333" />
    <text x="28" y="11" fontSize="6" fill="#d22" fontFamily="Liberation Mono">x</text>
    <text x="13" y="31" fontSize="6" fill="#d22" fontFamily="Liberation Mono">x</text>
  </>),
  newRegion: (<>
    <path d="M2 16l9 3v11l-9-3zM11 19l17-4v10l-17 5z" fill="#eaf0fa" stroke="#3a6ae0" />
    <path d="M6 17l12-10 8 8-15 5z" fill="#f6a21f" stroke="#c24a1c" />
    <path d="M20 0l2 6 6-3-3 6 6 2-7 1 1 6-4-5-5 2 3-5-4-4 5 1z" fill="#fdeb6a" stroke="#e8b010" strokeWidth=".6" />
    <path d="M14 24h12" stroke="#d22" strokeWidth="2" />
  </>),
  regionFace: (<>
    {box(16, 3, 12, 13, 6, "#f4f4f4", "#f6a21f", "#d8d8d8", "#777")}
    <polygon points="6,12 16,16 16,28 6,24" fill="#f6a21f" stroke="#e22" strokeWidth="1.400" />
  </>),
  trapez: (<>
    <polygon points="10,7 22,7 28,26 4,26" fill="#f4f8ff" stroke="#7a3ac8" strokeWidth="1.800" />
    <path d="M10 7h12" stroke="#22a84a" strokeWidth="2.200" /><path d="M4 26h24" stroke="#2a6ad8" strokeWidth="2" />
  </>),
  exclaim: (<>
    <path d="M12 2h8l-2 19h-4z" fill="#e01818" /><circle cx="16" cy="26" r="3.500" fill="#e01818" />
  </>),
  allF: (<>
    {box(12, 13, 8, 7, 3, "#ffe58a", "#e8b84a", "#f6d26a", "#8a7a3a")}
    {box(20, 3, 7, 9, 3, "#f4f4f4", "#bbb", "#ddd", "#888")}
  </>),
  ie: (<>
    <circle cx="16" cy="16" r="13" fill="#32b84a" stroke="#c8f0c8" strokeWidth="2" />
    <path d="M8 17h17M9 12c3-6 12-6 15 1M9 21c3 6 11 6 15 1" stroke="#fff" strokeWidth="2.600" fill="none" />
  </>),
  player: (<>
    <path d="M16 1a15 15 0 0 1 15 15H22a6 6 0 0 0-6-6z" fill="#6db33f" />
    <path d="M31 16a15 15 0 0 1-15 15v-9a6 6 0 0 0 6-6z" fill="#e8c42a" />
    <path d="M16 31A15 15 0 0 1 1 16h9a6 6 0 0 0 6 6z" fill="#2a72d8" />
    <path d="M1 16A15 15 0 0 1 16 1v9a6 6 0 0 0-6 6z" fill="#e8552a" />
    <circle cx="16" cy="16" r="10" fill="#f4f4f4" /><polygon points="12,9 24,16 12,23" fill="#222" />
  </>),
  photo: (<>
    <rect x="1" y="3" width="30" height="27" rx="1" fill="#2f78c8" />
    <rect x="4" y="5" width="24" height="23" fill="#cfe8f8" />
    <path d="M4 18c8-6 14-4 24-1v11H4z" fill="#3a5a6a" />
    <rect x="4" y="25" width="24" height="3" fill="#f4f4f4" />
  </>),
  folderTb: (<>
    <path d="M6 2l9 3v25l-9-3z" fill="#d8b44a" />
    <path d="M15 5h8l3 4v19l-11 2z" fill="#f4d978" />
    <path d="M9 7l10 3v18l-10-3z" fill="#fbe9a8" />
  </>),
  keyboard: (<>
    <path d="M22 8c2-4 5-4 7-6" stroke="#ccc" fill="none" />
    <rect x="2" y="11" width="28" height="15" rx="2" fill="#bbb" stroke="#eee" />
    <path d="M5 15h22M5 18h22M5 21h22" stroke="#555" strokeDasharray="2 1" strokeWidth="1.500" />
  </>),
};

const Ico = ({ n, s = 26 }) => (
  <svg width={s} height={s} viewBox="0 0 32 32" style={{ display: "block", flexShrink: 0 }}>{icons[n]}</svg>
);

/* ---------- window frame ---------- */
const Screen = styled.div`
  width: 1920px; height: 1080px; position: relative; overflow: hidden;
  display: flex; flex-direction: column; background: #d6d6d6;
  font-family: ${CJK}; font-size: 12px; color: #111;
`;
const TitleBar = styled.div`
  height: 22px; flex: none; display: flex; align-items: center; padding: 2px 0 0 3px;
  background: linear-gradient(#8a8a8a 0, #707070 2px, #2d2d2d 4px, #191919 8px, #161616 100%);
  color: #d8d8d8; font-family: "Liberation Sans", ${CJK}; font-size: 13px;
`;
const TitleText = styled.span` margin-left: 4px; flex: 1; white-space: pre; letter-spacing: .15px; `;
const Brand = styled.span`
  font-weight: 700; color: #fff; font-size: 13.500px; letter-spacing: .3px; margin-right: 24px;
`;
const WinBtn = styled.span`
  width: ${p => p.$w || 19}px; height: 19px; margin-left: 3px; display: flex; align-items: center; justify-content: center;
  border-radius: 0 0 3px 3px; color: #fff; font-size: 13px; font-weight: 700; line-height: 1;
  border: 1px solid #666; border-top: 0;
  background: ${p => p.$red ? "linear-gradient(#e0826c,#d63c1e 50%,#c93010)" : "linear-gradient(#7a7a7a,#4e4e4e 50%,#2b2b2b)"};
`;
const MenuBar = styled.div`
  height: 23px; flex: none; display: flex; align-items: center; padding-left: 5px;
  background: linear-gradient(#e8e8e8,#dedede); border-bottom: 1px solid #bdbdbd;
`;
const MenuIcon = styled.span` width: 25px; display: flex; `;
const MenuItem = styled.span`
  margin-right: ${p => p.$mr ?? 15}px; white-space: nowrap; font-size: 12px; line-height: 1;
  & > i { font-family: ${MONO}; font-style: normal; font-size: 9.500px; letter-spacing: -0.500px; }
`;
const MonoMenu = styled.span` font-family: ${MONO}; font-size: 10.500px; letter-spacing: -0.200px; margin-left: 3px; `;
const MdiBtns = styled.div` margin-left: auto; display: flex; gap: 2px; padding-right: 5px; `;
const MdiBtn = styled.span`
  width: 16px; height: 17px; border: 1px solid #888; border-radius: 3px; background: linear-gradient(#f4f4f4,#cfcfcf);
  color: #444; font-size: 11px; font-weight: 700; display: flex; align-items: center; justify-content: center;
  font-family: "Liberation Sans", sans-serif; line-height: 1;
`;
const Upload = styled.div`
  position: absolute; left: 1709px; top: 27px; width: 104px; height: 25px; display: flex; border-radius: 3px; overflow: hidden;
  border: 1px solid #3f8fd0; box-shadow: 0 1px 1px #888; z-index: 5;
`;
const UploadLogo = styled.span` width: 30px; background: #2f95e4; display: flex; align-items: center; justify-content: center; `;
const UploadText = styled.span`
  flex: 1; background: linear-gradient(#d2ebfb,#a8dcf8); color: #5c7e9c; display: flex; align-items: center; justify-content: center; font-size: 12px;
`;

/* ---------- toolbars ---------- */
const ToolRow = styled.div`
  height: ${p => p.$h}px; flex: none; display: flex; align-items: stretch; position: relative;
  background: linear-gradient(#e8e8e8,#d2d2d2); border-bottom: 2px solid ${p => p.$line || "#b8b8b8"};
`;
const Group = styled.div`
  display: flex; align-items: ${p => p.$center ? "center" : "stretch"}; background: linear-gradient(#dedede,#cbcbcb);
  border-right: 1px solid #bfbfbf; border-top: 1px solid #f6f6f6;
  margin-right: ${p => p.$mr || 0}px;
`;
const Grip = styled.span`
  width: ${p => p.$w || 7}px; flex: none; position: relative;
  &::before { content: ""; position: absolute; left: 3px; top: 4px; bottom: 4px; width: 2px;
    background: repeating-linear-gradient(#9c9c9c 0 1px, #f4f4f4 1px 3px); }
`;
const SmallBtn = styled.span`
  width: ${p => p.$w || 31}px; flex: none; display: flex; align-items: center; justify-content: center;
  ${p => p.$boxed && `
    & > svg { background: #fff; outline: 1px solid #707070; outline-offset: 2px; border-radius: 2px; }
  `}
`;
const StartBtn = styled.span`
  width: 66px; flex: none; display: flex; align-items: center; gap: 3px; font-size: 12px;
`;
const Sep = styled.span`
  width: ${p => p.$w}px; flex: none; position: relative;
  &::after { content: ""; position: absolute; top: 2px; bottom: 2px; right: ${p => p.$r ?? 2}px; width: 1px; background: #fafafa; box-shadow: -1px 0 0 #b8b8b8; }
`;
const DropArrow = styled.span`
  width: ${p => p.$w || 12}px; flex: none; position: relative; display: block;
  &::after { content: ""; position: absolute; left: ${p => (p.$w || 12) / 2 - 4}px; top: ${p => p.$top}px;
    border: 3.500px solid transparent; border-top: 4px solid #111; border-bottom: 0; }
`;
const LargeBtn = styled.div`
  width: ${p => p.$w || 60}px; flex: none; display: flex; flex-direction: column; align-items: center; padding-top: 1px;
  color: ${p => p.$off ? "#9a9a9a" : "#111"};
`;
const IconSlot = styled.span` height: 31px; display: flex; align-items: center; justify-content: center; flex: none; `;
const LargeLabel = styled.span`
  width: 56px; text-align: center; font-size: 12px; line-height: 12px; margin-top: ${p => p.$mono ? 2 : 0}px;
  font-family: ${p => p.$mono ? MONO : CJK};
  ${p => p.$mono && "font-size: 10px;"}
`;

const hasLatin = s => /^[A-Za-z ]+$/.test(s);

const renderSmall = (items, top = 17) => items.map((it, i) => {
  if (it === "v") return <DropArrow key={i} $w={12} $top={top} />;
  if (typeof it === "number") return <Sep key={i} $w={it} />;
  if (it.startsWith("#")) return <SmallBtn key={i} $boxed><Ico n={it.slice(1)} /></SmallBtn>;
  return <SmallBtn key={i}><Ico n={it} /></SmallBtn>;
});

const renderLarge = items => items.map((it, i) => {
  if (it === "|") return <Sep key={i} $w={6} />;
  if (typeof it === "number") return <Sep key={i} $w={it} />;
  if (it[0] === "v") return <DropArrow key={i} $w={it[1]} $top={it[2]} />;
  const [n, label, off] = it;
  return (
    <LargeBtn key={i} $off={off}>
      <IconSlot style={off ? { opacity: 0.85 } : undefined}><Ico n={n} s={27} /></IconSlot>
      <LargeLabel $mono={hasLatin(label)}>{label}</LargeLabel>
    </LargeBtn>
  );
});

const row2A = [["sketch", "草图"], "|", ["extrude", "拉伸"], ["revolve", "回转"], ["swept", "Swept"], ["tube", "管道"], "|", ["extract", "抽取几何体"], "|", ["datum", "基准平面"], ["v", 15, 50]];
const row2B = [["unite", "Unite"], ["v", 12, 27], ["datum", "Datum Plane"], ["v", 12, 27], ["draft", "拔模"], ["blend", "边倒圆"], ["chamfer", "倒斜角"], ["mirrorF", "镜像特征"], ["mirrorB", "镜像体"], ["sew", "缝合"], ["patch", "修补"], ["offsetF", "偏置面"], ["scale", "缩放体"], ["splitB", "拆分体"], ["splitF", "分割面"], ["hole", "Hole"], "|", ["extract", "Extract"], ["v", 12, 27], ["unite", "求和"], ["subtract", "求差"], ["v", 15, 50]];
const row3B = [["move", "移动面"], ["pull", "抽取面"], ["offsetR", "偏置区域"], ["replace", "替换面"], ["resizeB", "调整圆角大小"], ["resizeC", "调整面的大小"], ["delF", "删除面"], 7, ["copyF", "复制面"], ["v", 14, 27], 5, ["copl", "设为共面"], ["v", 14, 27], 3, ["linDim", "线性尺寸"], ["v", 14, 27], 5, ["shell", "壳体", true], ["v", 14, 27], 2, ["combine", "组合面"], ["section", "横截面编辑", true], ["v", 14, 50]];
const row3C = [["line", "直线"], ["rect", "矩形"], "|", ["offC", "偏置曲线"], ["spline", "Spline"], ["v", 12, 27], ["bridge", "桥接曲线"], ["project", "Project Curve"], ["v", 10, 27], ["mirrorC", "镜像曲线"], ["extC", "抽取曲线"], ["v", 15, 50]];

/* ---------- selection bar / status ---------- */
const SelBar = styled.div`
  height: 28px; flex: none; display: flex; align-items: center; position: relative;
  background: linear-gradient(#b9b9b9 0,#d2d2d2 5px,#dcdcdc); border-bottom: 1px solid #a8a8a8;
`;
const Combo = styled.span`
  width: ${p => p.$w}px; height: 16px; margin-left: ${p => p.$ml}px; flex: none; background: #fff; border: 1px solid #666; border-radius: 2px;
  position: relative; font-size: 12px; line-height: 14px; padding-left: 1px; white-space: nowrap; overflow: hidden;
`;
const ComboArrow = styled.span`
  position: absolute; right: 0; top: 0; bottom: 0; width: 15px; background: linear-gradient(#cfe4fb,#5a98de); border-left: 1px solid #6a90c0;
  &::after { content: ""; position: absolute; left: 2px; top: 4px; border: 5px solid transparent; border-top: 6px solid #111; border-bottom: 0; }
`;
const SelRight = styled.span`
  position: absolute; right: 3px; top: 11px; border: 4px solid transparent; border-top: 4px solid #111; border-bottom: 0;
`;
const StatusBar = styled.div`
  height: 22px; flex: none; display: flex; align-items: center; padding-left: 2px; position: relative;
  background: linear-gradient(#e2e2e2,#d0d0d0); border-bottom: 1px solid #9c9c9c; font-weight: 700; font-size: 12px;
`;
const StatusDiv = styled.span`
  position: absolute; top: 0; bottom: 0; left: ${p => p.$x}px; width: 1px; background: #f6f6f6;
`;
const StatusIcon = styled.span` position: absolute; right: 2px; top: 2px; `;
const DockStrip = styled.div`
  height: 16px; flex: none; padding: 2px 0 0 37px; background: linear-gradient(#e6e6e6,#cfcfcf); border-bottom: 1px solid #bfbfbf;
`;
const DialogTabs = styled.div` display: flex; height: 14px; `;
const TabBtn = styled.span`
  width: ${p => p.$w || 19}px; flex: none; background: ${p => p.$light ? "linear-gradient(#f2f2f2,#cfcfcf)" : "#111"}; color: ${p => p.$light ? "#555" : "#fff"};
  display: flex; align-items: center; justify-content: center; font-size: 13px; font-weight: 700; line-height: 1;
  border-right: 1px solid #999; font-family: ${CJK};
`;

/* ---------- main area ---------- */
const Main = styled.div` height: 767px; flex: none; display: flex; background: #b7b7b7; `;
const Rail = styled.div`
  width: 37px; flex: none; display: flex; flex-direction: column; padding: 0 0 0 6px; background: #c0c0c0; border-right: 4px solid #8d8d8d;
`;
const RailTab = styled.div`
  width: ${p => p.$on ? 31 : 27}px; height: ${p => p.$h || 40}px; margin-top: ${p => p.$mt || 0}px; margin-left: ${p => p.$on ? -2 : 0}px;
  display: flex; align-items: center; justify-content: center; padding-right: 2px; flex: none;
  background: ${p => p.$on ? "#ececec" : "linear-gradient(90deg,#e2e2e2,#d6d6d6)"};
  border: 1px solid #8b8b8b; border-right: 0; border-radius: 5px 0 0 5px;
`;
const Dialog = styled.div`
  width: 331px; flex: none; display: flex; flex-direction: column; padding: 12px 6px 0;
  background: #e9e9e9; border-left: 1px solid #aaa; border-right: 1px solid #9a9a9a;
`;
const SecHead = styled.div`
  height: ${p => p.$h || 22}px; flex: none; display: flex; align-items: center; justify-content: space-between; padding-left: 6px;
  background: linear-gradient(#f6f6f6,#fafafa 30%,#d8d8d8); font-weight: 700; font-size: 12px; margin-top: ${p => p.$mt || 0}px;
  border-bottom: 1px solid #aaa;
`;
const Chevron = styled.span`
  width: 23px; height: 100%; border-left: 1px solid #bbb; display: flex; align-items: center; justify-content: center;
  & > svg { display: block; }
`;
const SecBody = styled.div`
  height: ${p => p.$h}px; flex: none; background: #cfcfcf; padding: ${p => p.$pad || "0 8px"}; position: relative;
`;
const Table = styled.div`
  border: 1px solid #6c6c6c; background: #fff; height: 199px; margin-top: 7px; position: relative;
  display: flex; flex-direction: column; overflow: hidden;
`;
const THead = styled.div`
  height: 18px; flex: none; display: grid; grid-template-columns: 160px 90px 1fr;
  background: linear-gradient(#ececec,#cdcdcd); font-size: 12px; line-height: 16px;
`;
const Th = styled.span` padding-left: ${p => p.$pl ?? 5}px; border-right: 1px solid #fff; `;
const Rows = styled.div` flex: 1; overflow: hidden; `;
const Tr = styled.div`
  height: 20px; display: grid; grid-template-columns: 160px 90px 1fr; border-bottom: 1px solid #e3e3e3; align-items: center;
  font-size: 10.500px; color: ${p => p.$sel ? "#fff" : "#222"};
`;
const TdName = styled.div`
  height: 100%; display: flex; align-items: center; position: relative; padding-left: 18px;
  font-family: ${MONO}; font-size: 10px; border-right: 1px solid #e3e3e3;
`;
const TreeLine = styled.i`
  position: absolute; left: 9px; width: 8px; top: 50%; border-top: 1px dotted #777;
  &::before { content: ""; position: absolute; left: 0; top: -10px; height: ${p => p.$last ? 10 : 20}px; border-left: 1px dotted #777; }
`;
const NameText = styled.span`
  margin-left: 2px; height: 18px; line-height: 18px; flex: 1; padding-left: 2px;
  ${p => p.$sel && "background:#3393f3; color:#d6ecff; outline: 1px dotted #222;"}
`;
const TdVal = styled.div`
  height: 100%; line-height: 19px; padding-left: 5px; font-family: "Liberation Sans", sans-serif; letter-spacing: -.1px; border-right: 1px solid #e3e3e3;
  ${p => p.$sel && "background:#3393f3; color:#d6ecff;"}
`;
const HScroll = styled.div`
  height: ${p => p.$h || 17}px; flex: none; background: #fff; display: flex; align-items: center; position: relative; padding: 0 ${p => p.$pr}px 0 ${p => p.$pl}px;
`;
const ScrollThumb = styled.span`
  flex: 1; height: 14px; border: 1px solid #9c9c9c; border-radius: 2px; background: linear-gradient(#f3f3f3,#c8c8c8);
  display: flex; align-items: center; justify-content: center; font-size: 9px; letter-spacing: -1px; color: #555;
  font-family: ${MONO};
`;
const ScrollEnd = styled.span`
  position: absolute; top: 50%; margin-top: -4px; ${p => p.$side}: ${p => p.$at}px;
  border: 4px solid transparent;
  ${p => p.$side === "left" ? "border-right: 4px solid #333; border-left: 0;" : "border-left: 4px solid #333; border-right: 0;"}
`;
const StepRow = styled.div`
  height: 34px; display: flex; align-items: center; justify-content: space-between; padding-right: 1px; color: #333; font-size: 12px;
  margin-top: ${p => p.$mt || 0}px;
`;
const StepBar = styled.div`
  width: 249px; height: 31px; display: flex; align-items: center; gap: 3px; padding-left: 2px; border-radius: 7px 0 0 7px;
  background: linear-gradient(90deg,#dfae7c 0 31%,#e2b687 31% 55%,#dfbe9a 55% 68%,#d9c4a2 68% 77%,#dcc2a4 77% 89%,#d8cbb6 89%);
  color: #3a3226; font-size: 12px;
`;
const OkMark = styled.svg` flex: none; `;
const StepBtn = styled.span`
  width: 30px; height: 30px; border: 1px solid #666; border-radius: 4px; display: flex; align-items: center; justify-content: center;
  background: ${p => p.$on ? "linear-gradient(#f8a94a,#f6b96e)" : "linear-gradient(#fcfcfc,#d8d8d8)"};
  ${p => p.$on && "border-color: #d2691e; box-shadow: 0 0 0 1px #888;"}
`;
const CheckRow = styled.label`
  height: 23px; display: flex; align-items: center; gap: 3px; color: #333; font-size: 12px;
`;
const CheckBox = styled.span`
  width: 15px; height: 15px; border: 1px solid #777; border-radius: 2px; background: linear-gradient(#eaeaea,#c4c4c4);
`;
const ColorRow = styled.div` display: flex; justify-content: space-between; height: 23px; padding-top: 7px; color: #333; font-size: 12px; line-height: 18px; `;
const Swatch = styled.span` width: 72px; height: 15px; background: #3563c7; border: 1px solid #8a8a8a; margin-right: -1px; `;
const GroupBox = styled.div`
  height: 47px; margin-top: 7px; width: 303px; background: #bdbdbd; border: 1px solid #999; border-color: #8f8f8f #f0f0f0 #f0f0f0 #8f8f8f;
  padding: 1px 0 0 8px;
`;
const GroupTitle = styled.div` font-weight: 700; font-size: 12px; line-height: 18px; `;
const RadioRow = styled.div` display: flex; margin-left: -4px; margin-top: 3px; `;
const Radio = styled.label` width: 80px; display: flex; align-items: center; gap: 2px; color: #333; font-size: 12px; line-height: 16px; `;
const RadioDot = styled.span`
  width: 15px; height: 15px; border-radius: 50%; border: 1px solid #6a6a6a; flex: none;
  background: ${p => p.$on ? "radial-gradient(circle,#123a7a 0 3px,#58aaf0 3.500px 6px,#cfe8fb 7px)" : "linear-gradient(#e4e4e4,#c4c4c4)"};
`;
const SliderValue = styled.div` margin: 5px 0 0 10px; font-family: "Liberation Sans", sans-serif; font-size: 11.500px; line-height: 16px; color: #123; `;
const SliderBox = styled.div`
  height: 22px; position: relative; margin: 3px 0 0 9px; width: 285px;
  &::before { content: ""; position: absolute; left: 8px; right: 8px; top: 10px; height: 3px; background: #e4e4e4; border: 1px solid #c0c0c0; border-left: 0; border-right: 0; }
`;
const Thumb = styled.span`
  position: absolute; left: 1px; top: 1px; width: 9px; height: 18px; border: 1px solid #777; border-radius: 5px 5px 1px 1px;
  background: linear-gradient(#e8f4fc 0 35%,#7cc8f0 50%,#a8dcf8);
`;
const SliderEnds = styled.div`
  display: flex; justify-content: space-between; font-family: "Liberation Sans", sans-serif; font-size: 11.500px; color: #222; line-height: 16px; margin-top: 3px; padding-left: 5px; width: 302px;
`;
const ActionRow = styled.div`
  height: 40px; flex: none; display: flex; justify-content: flex-end; gap: 8px; padding: 5px 10px 0 0; border-top: 1px solid #fafafa; margin-top: 3px; box-shadow: inset 0 1px 0 #cfcfcf;
`;
const ActionBtn = styled.span`
  width: 51px; height: 22px; border: 1px solid #6e6e6e; border-radius: 3px; text-align: center; font-size: 12px; line-height: 20px; color: #222; box-shadow: 0 0 0 1px #fff inset;
  background: ${p => p.$primary ? "linear-gradient(#d8ecc0 0 45%,#8fd070 50%,#9ee07e)" : "linear-gradient(#f6f6f6,#dcdcdc 50%,#e6e6e6)"};
  ${p => p.$primary && "border-color:#4a8a4a;"}
`;
const BlackBar = styled.div` height: 8px; flex: none; margin: 0 -6px; background: linear-gradient(#3a3a3a,#000 40%); border-radius: 0 0 4px 4px; `;
const LowerSash = styled.div`
  height: 11px; display: flex; align-items: center; justify-content: center; position: relative; flex: none;
  &::before { content: ""; position: absolute; left: 0; right: 0; top: 4px; height: 1px; background: #bbb; }
`;
const SashGrip = styled.span` width: 62px; height: 6px; background: #d6d6d6; border: 1px solid #aaa; position: relative; `;

const Resource = styled.div`
  width: 64px; margin-left: 5px; flex: none; display: flex; flex-direction: column; background: #d6d6d6; border-right: 1px solid #999;
`;
const ResGroup = styled.div`
  height: ${p => p.$h}px; flex: none; background: #c9c9c9; border-bottom: 2px solid #e4e4e4; padding-top: ${p => p.$pt || 0}px; position: relative;
  display: flex; flex-direction: column; align-items: center;
`;
const ResDots = styled.span`
  position: absolute; left: 7px; right: 3px; top: 3px; height: 2px; background: repeating-linear-gradient(90deg,#999 0 1px,#f0f0f0 1px 3px);
`;
const ResItem = styled.div`
  width: 100%; height: ${p => p.$h || 59}px; flex: none; display: flex; flex-direction: column; align-items: center; text-align: center;
`;
const ResLabel = styled.span` display: block; width: 52px; font-family: ${MONO}; font-size: 12px; line-height: 12px; margin-top: 1px; word-spacing: -3px; `;
const ResArrow = styled.span`
  position: absolute; left: 5px; bottom: 4px; border: 4px solid transparent; border-right: 4px solid #111; border-left: 0;
`;
const Viewport = styled.div` width: 1476px; height: 767px; margin-left: 3px; background: #000; flex: none; border-top: 1px solid #e8e8e8; `;
const Scene = styled.svg` display: block; shape-rendering: crispEdges; `;

/* ---------- taskbar ---------- */
const WhiteLine = styled.div` height: 3px; flex: none; background: linear-gradient(#e8e8e8,#fff 60%,#1c2026); `;
const Taskbar = styled.div`
  height: 40px; flex: none; display: flex; align-items: center; position: relative; padding-left: 60px; gap: 4px;
  background:
    radial-gradient(ellipse 160px 40px at 1000px 25px,#4e6f8a 0,transparent 100%),
    radial-gradient(ellipse 130px 40px at 1150px 5px,#5c7f99 0,transparent 100%),
    radial-gradient(ellipse 100px 30px at 1300px 28px,#44637c 0,transparent 100%),
    radial-gradient(ellipse 90px 30px at 1480px 12px,#3c566c 0,transparent 100%),
    linear-gradient(90deg,#222a32 0,#252e37 870px,#324a5e 1150px,#263440 1500px,#1d262e);
`;
const Orb = styled.span`
  position: absolute; left: 8px; top: 1px; width: 38px; height: 38px; border-radius: 50%;
  background: radial-gradient(circle at 50% 30%,#a9c8ee 0,#3a6db0 45%,#16345f 100%); border: 1px solid #8a9fb8;
  display: grid; grid-template-columns: 10px 10px; grid-template-rows: 10px 10px; gap: 1px; align-content: center; justify-content: center;
`;
const Pane = styled.i` background: ${p => p.$c}; transform: skewY(-6deg); `;
const TaskBtn = styled.div`
  width: 158px; height: 38px; flex: none; display: flex; align-items: center; gap: ${p => p.$gap ?? 6}px; padding-left: ${p => p.$pl || 9}px;
  border: 1px solid #7e8a96; border-radius: 3px; color: #eef2f6; font-family: "Liberation Sans", ${CJK}; font-size: 12px; white-space: nowrap;
  box-shadow: inset 0 0 0 1px rgba(0,0,0,.35);
  background: ${p => p.$on
    ? "linear-gradient(#7e868e,#5e666e 50%,#6a737b)"
    : p.$bright ? "linear-gradient(100deg,#2e3a44,#4c5d6c 50%,#7c94a8)" : "linear-gradient(100deg,#2a3139,#3f4951 50%,#2e363e)"};
`;
const Tray = styled.div`
  position: absolute; right: 304px; top: 10px; color: #eee; font-family: ${MONO}; font-size: 10.500px; display: flex; align-items: center; gap: 9px;
`;

/* ---------- watermark ---------- */
const Watermark = styled.div`
  position: absolute; left: 1616px; top: 977px; width: 299px; height: 98px; background: #fff; display: flex; align-items: center; padding-left: 5px;
`;
const WmText = styled.div` margin-left: 8px; display: flex; flex-direction: column; align-items: center; `;
const WmTitle = styled.div`
  font-family: "Liberation Sans", "Noto Sans CJK SC", sans-serif; font-weight: 900; font-size: 47px; line-height: 52px; color: #3ea4ec; letter-spacing: -0.500px; white-space: nowrap;
`;
const WmUrl = styled.div`
  font-family: "Liberation Sans", sans-serif; font-weight: 700; font-size: 15px; line-height: 16px; letter-spacing: 3.300px; color: #3ea4ec; white-space: nowrap;
`;

const ChevIcon = ({ up }) => (
  <svg width="13" height="9" viewBox="0 0 13 9">
    <path d={up ? "M1 8l5.500-6L12 8" : "M1 1l5.500 6L12 1"} fill="none" stroke="#555" strokeWidth="2.600" />
  </svg>
);
const Section = ({ title, up = true, mt }) => (
  <SecHead $mt={mt}>{title}<Chevron><ChevIcon up={up} /></Chevron></SecHead>
);

const regions = [
  { name: "All Faces", n: "1870", l: "", ic: "allF" },
  { name: "Undefined Faces", n: "33", l: "", ic: "exclaim" },
  { name: "Cavity region", n: "782", l: "28", ic: "exclaim" },
  { name: "Core region", n: "1055", l: "27", ic: "exclaim", sel: true },
  { name: "New region", n: "0", l: "29", ic: "exclaim", last: true },
  { name: "" }, { name: "" }, { name: "" }, { name: "" },
];

const railTabs = [
  ["tree1", 40, 15], ["tree2", 42, 1, true], ["bolt", 40, 2], ["webDoc", 40, 13], ["clock", 39, 15], ["checklist", 41, 3],
  ["rainbow", 40, 1], ["wand", 40, 2], ["users", 40, 3], ["land", 39, 3],
];

const Z = ({ p, fill = "none", stroke, w }) => <polygon points={p} fill={fill} stroke={stroke} strokeWidth={w} strokeLinejoin="round" />;
const orange = "#f9a54c";
const faceC = "#fdcb6c";
const sky = "#87c1ff";

/* model in zoomed coordinates, scaled back by the group transform */
const PartModel = () => (
  <g transform="translate(700 550) scale(0.3333)">
    <Z p="80,100 105,62 220,62 1190,132 1230,190 1235,215 1215,600 1170,652 1150,650 105,575 65,540" fill="#2a4259" stroke="#222" w="7" />
    <Z p="1190,190 1230,190 1232,215 1212,600 1170,650 1160,630" fill="#4a7099" stroke="#222" w="4" />
    <path d="M1215 270l-35 20M1220 370l-40 25M1215 440l-40 25M1212 600l-35 22" stroke="#263a50" strokeWidth="5" fill="none" />
    <Z p="80,100 100,88 1175,168 1195,205 1175,640 1150,650 105,575 65,540" fill={faceC} stroke="#222" w="6" />
    {/* rim */}
    <Z p="85,100 100,90 1175,170 1190,205 1170,635 1150,645 1130,640 1145,220 1120,190 310,130 80,125" fill={orange} />
    <Z p="80,120 120,120 100,570 70,535" fill={orange} />
    <path d="M105 575L1150 648" stroke={orange} strokeWidth="14" />
    {[[125,95,45],[300,118,30],[355,128,25],[430,132,25],[480,140,20],[520,140,15],[570,142,35],[675,148,65],[935,172,15],[968,172,12],[1000,172,10],[1070,178,30]].map(([x,y,l],i) => (
      <path key={i} d={`M${x} ${y}l${l} 4`} stroke="#6e4a20" strokeWidth="7" />
    ))}
    {[[1165,225],[1168,265],[1160,320],[1165,360],[1160,400],[1155,440],[1160,520],[1160,580],[1155,620]].map(([x,y],i) => (
      <path key={i} d={`M${x - 12} ${y}h24`} stroke="#8a5c28" strokeWidth="6" />
    ))}
    {/* speaker circles */}
    <circle cx="180" cy="210" r="78" fill={faceC} stroke={orange} strokeWidth="20" />
    <circle cx="170" cy="495" r="82" fill={faceC} stroke={orange} strokeWidth="20" />
    {[[125,218,9,32],[178,212,11,34],[236,215,10,32]].map(([x,y,a,b],i) => (
      <g key={i}><ellipse cx={x} cy={y} rx={a + 10} ry={b + 10} fill={orange} /><ellipse cx={x} cy={y} rx={a} ry={b} fill="#c9ffff" /></g>
    ))}
    {[[110,505,7,30],[165,512,12,30],[222,515,11,30]].map(([x,y,a,b],i) => (
      <g key={i}><ellipse cx={x} cy={y} rx={a + 10} ry={b + 10} fill={orange} /><ellipse cx={x} cy={y} rx={a} ry={b} fill="#c9ffff" /></g>
    ))}
    <rect x="110" y="300" width="130" height="115" rx="20" fill={faceC} stroke={orange} strokeWidth="8" />
    <circle cx="173" cy="360" r="30" fill={faceC} stroke={orange} strokeWidth="10" />
    <circle cx="173" cy="360" r="12" fill="#c9ffff" stroke={orange} strokeWidth="5" />
    {/* slots */}
    <Z p="283,165 300,170 292,278 276,276" fill="#7a90a8" stroke="#222" w="3" />
    <Z p="268,295 282,295 278,420 264,440" fill={orange} />
    <Z p="283,320 312,322 308,397 282,395" fill="#d4ffff" stroke={orange} w="8" />
    <Z p="275,445 290,445 284,558 270,556" fill="#7a90a8" stroke="#222" w="3" />
    {/* windows */}
    {[
      "380,185 540,200 535,385 375,375",
      "540,215 708,225 695,370 535,360",
      "400,380 500,392 495,436 400,430",
      "375,475 415,442 495,458 490,580 372,572",
      "510,395 678,410 668,535 510,525",
      "906,210 1078,225 1066,388 900,380",
      "900,440 1068,455 1052,625 895,625",
      "315,437 360,442 358,488 313,485",
    ].map((p, i) => <Z key={i} p={p} fill={sky} stroke={orange} w="10" />)}
    <path d="M540 205l-5 155M400 378l100 10M405 435l90 5" stroke="#222" strokeWidth="4" fill="none" />
    <path d="M535 362l165 10v12l-165-12z" fill={faceC} stroke={orange} strokeWidth="6" />
    <Z p="648,185 692,188 688,214 645,212" stroke={orange} w="7" />
    <Z p="680,480 720,480 718,516 678,512" stroke={orange} w="7" />
    <Z p="780,225 815,200 895,205 890,380 775,372" stroke={orange} w="9" />
    <path d="M795 210L790 372" stroke={orange} strokeWidth="8" />
    <Z p="770,460 810,432 890,436 885,630 765,605" stroke={orange} w="9" />
    <path d="M785 445L778 605" stroke={orange} strokeWidth="8" />
    <path d="M906 185L898 405" stroke="#222" strokeWidth="5" />
    <path d="M900 410L890 632" stroke="#5a7a99" strokeWidth="10" />
    <path d="M905 412L895 632M885 410L878 632" stroke="#222" strokeWidth="3" />
    <Z p="585,113 660,70 668,78 595,122" fill="#4d6a80" stroke="#222" w="3" />
    <rect x="420" y="580" width="30" height="12" fill="#1a3fc8" />
    <rect x="330" y="582" width="15" height="10" fill="#333" />
    <path d="M597 282v105M570 405h120" stroke="#b8b8b8" strokeWidth="5" fill="none" />
    <text x="602" y="270" fill="#c8c8c8" fontSize="26" fontFamily="Liberation Mono" style={{ shapeRendering: "auto" }}>XC</text>
    <text x="714" y="398" fill="#c8c8c8" fontSize="26" fontFamily="Liberation Mono">YC</text>
    <circle cx="100" cy="98" r="10" fill="none" stroke="#b9752b" strokeWidth="5" />
    <circle cx="1140" cy="178" r="10" fill="none" stroke="#b9752b" strokeWidth="5" />
  </g>
);

export default function App() {
  return (
    <Screen>
      <GlobalStyle />
      <TitleBar>
        <Ico n="nx" s={18} />
        <TitleText>NX 6 - Modeling - [3Dshoujikehuakuai.prt（ 修改的 ）]</TitleText>
        <Brand>SIEMENS</Brand>
        <WinBtn>_</WinBtn>
        <WinBtn>❐</WinBtn>
        <WinBtn $red $w={20}>✕</WinBtn>
      </TitleBar>
      <MenuBar>
        <MenuIcon>
          <svg width="20" height="20" viewBox="0 0 20 20"><path d="M3 5l10-3 3 3v10l-10 3-3-3z" fill="#2a68c8" stroke="#123a80" /><path d="M3 5l10-3" stroke="#9cc2f0" strokeWidth="2" /></svg>
        </MenuIcon>
        {[["文件", "(F)"], ["编辑", "(E)"], ["视图", "(V)"], ["插入", "(S)"], ["格式", "(R)"], ["工具", "(T)"], ["装配", "(A)"], ["信息", "(I)"], ["分析", "(L)"], ["首选项", "(P)"], ["窗口", "(O)"], ["帮助", "(H)"]].map(([a, b]) => (
          <MenuItem key={a}>{a}<i>{b}</i></MenuItem>
        ))}
        <MonoMenu>HB_MOULD M6.6</MonoMenu>
        <MdiBtns><MdiBtn>_</MdiBtn><MdiBtn>❐</MdiBtn><MdiBtn>✕</MdiBtn></MdiBtns>
      </MenuBar>
      <Upload>
        <UploadLogo>
          <svg width="22" height="18" viewBox="0 0 22 18"><circle cx="6" cy="11" r="4.500" fill="none" stroke="#fff" strokeWidth="2.600" /><circle cx="13" cy="6" r="4.500" fill="none" stroke="#fff" strokeWidth="2.600" /><path d="M10 15h7" stroke="#fff" strokeWidth="2.600" /><circle cx="19" cy="13" r="1.500" fill="#fff" /></svg>
        </UploadLogo>
        <UploadText>拖拽上传</UploadText>
      </Upload>

      <ToolRow $h={35}>
        <Group>
          <Grip $w={8} />
          <StartBtn><Ico n="nx" s={30} />开始<DropArrow $w={6} $top={16} /></StartBtn>
          {renderSmall(["doc", "open", "save", 7, "cut", "copy", "paste", "del", 5, "undo", "redo", 7, "info", 5, "bino", "v", 2])}
        </Group>
        <Group>
          <Grip $w={8} />
          {renderSmall(["fit", "fitGray", "zoomWin", "zoom", "rot", "pan", "viewCam", 7, "viewCube", "v", "#shaded", "bracket", "v", "white", "v", 6, "sideA", "sideB", "v"])}
        </Group>
        <Group>
          <Grip $w={9} />
          {renderSmall(["#wcs", "wcsB", "palette", "wcsC", "wcsD", "wcsE", "wcsF", 6, "ruler", "angle", "v", 2])}
        </Group>
      </ToolRow>

      <ToolRow $h={62}>
        <Group>
          <Grip $w={7} />
          {renderLarge(row2A)}
        </Group>
        <Group>
          <Grip $w={7} />
          {renderLarge(row2B)}
        </Group>
      </ToolRow>

      <ToolRow $h={62} $line="#9a9a9a">
        <Group>
          <Grip $w={7} />
          {renderSmall(["block", "blueX", "cross", "curveS", "frame", "layers", "spark", "flag", "trimX", "meshP", "split2", "stackOk", 7, "stack"], 25)}
          <DropArrow $w={14} $top={50} />
        </Group>
        <Group>
          <Grip $w={7} />
          {renderLarge(row3B)}
        </Group>
        <Group>
          <Grip $w={7} />
          {renderLarge(row3C)}
        </Group>
      </ToolRow>

      <SelBar>
        <Combo $w={110} $ml={6}>面<ComboArrow /></Combo>
        <Combo $w={115} $ml={8}>仅在工作部件内部<ComboArrow /></Combo>
        <SmallBtn $w={31}><Ico n="selGray" s={18} /></SmallBtn>
        <Sep $w={2} />
        <SmallBtn $w={23}><Ico n="filter" s={20} /></SmallBtn>
        <DropArrow $w={8} $top={-2} />
        <SmallBtn $w={24}><Ico n="selBack" s={16} /></SmallBtn>
        <SmallBtn $w={24}><Ico n="selRoll" s={18} /></SmallBtn>
        <SmallBtn $w={24}><Ico n="selCross" s={19} /></SmallBtn>
        <SmallBtn $w={24}><Ico n="selGrayPipe" s={18} /></SmallBtn>
        <Sep $w={6} />
        <SmallBtn $w={18}><Ico n="rectSel" s={18} /></SmallBtn>
        <DropArrow $w={16} $top={-2} />
        <Sep $w={6} />
        <Combo $w={115} $ml={2}>单个面<ComboArrow /></Combo>
        <Sep $w={9} />
        <SmallBtn $w={22}><Ico n="cubeSel" s={20} /></SmallBtn>
        <SelRight />
      </SelBar>

      <StatusBar>
        选择用于选定区域的面
        <StatusDiv $x={920} /><StatusDiv $x={1842} /><StatusDiv $x={1862} />
        <StatusIcon>
          <svg width="16" height="16" viewBox="0 0 16 16"><path d="M1 4V1h3M12 1h3v3M15 12v3h-3M4 15H1v-3" fill="none" stroke="#445" strokeWidth="1.200" /><rect x="4" y="4" width="8" height="8" fill="#2f62c0" stroke="#cfe2fb" /></svg>
        </StatusIcon>
      </StatusBar>

      <DockStrip>
        <DialogTabs>
          <TabBtn $light $w={18}>
            <svg width="8" height="12" viewBox="0 0 8 12"><path d="M6.500 1L1.500 6l5 5" fill="none" stroke="#555" strokeWidth="2" /></svg>
          </TabBtn>
          <TabBtn $w={20}>
            <svg width="11" height="11" viewBox="0 0 11 11"><path d="M1 1l9 2-3 2 4 4-2 2-4-4-2 3z" fill="#fff" /></svg>
          </TabBtn>
          <TabBtn $w={70}>定义区域</TabBtn>
          <TabBtn>↺</TabBtn>
          <TabBtn $w={20}>−</TabBtn>
          <TabBtn $w={20}>✕</TabBtn>
          <TabBtn $light $w={18}>
            <svg width="8" height="12" viewBox="0 0 8 12"><path d="M1.500 1l5 5-5 5" fill="none" stroke="#555" strokeWidth="2" /></svg>
          </TabBtn>
        </DialogTabs>
      </DockStrip>

      <Main>
        <Rail>
          {railTabs.map(([n, h, mt, on]) => (
            <RailTab key={n} $h={h} $mt={mt} $on={on}><Ico n={n} s={24} /></RailTab>
          ))}
        </Rail>

        <Dialog>
          <Section title="定义区域" />
          <SecBody $h={318}>
            <Table>
              <THead><Th $pl={7}>区域名称</Th><Th>数量</Th><Th>图层</Th></THead>
              <Rows>
                {regions.map((r, i) => (
                  <Tr key={i} $sel={r.sel}>
                    <TdName>
                      {r.name && <TreeLine $last={r.last} />}
                      {r.ic && <Ico n={r.ic} s={16} />}
                      <NameText $sel={r.sel}>{r.name}</NameText>
                    </TdName>
                    <TdVal $sel={r.sel}>{r.n}</TdVal>
                    <TdVal $sel={r.sel}>{r.l}</TdVal>
                  </Tr>
                ))}
              </Rows>
              <HScroll $pl={19} $pr={29} $h={17}>
                <ScrollEnd $side="left" $at={6} />
                <ScrollThumb>|||</ScrollThumb>
                <ScrollEnd $side="right" $at={7} />
              </HScroll>
            </Table>
            <StepRow $mt={1}>创建新区域<StepBtn><Ico n="newRegion" s={24} /></StepBtn></StepRow>
            <StepRow>
              <StepBar>
                <OkMark width="15" height="14" viewBox="0 0 15 14"><path d="M1 7l4 5L14 2" stroke="#22a81f" strokeWidth="3.400" fill="none" /></OkMark>
                选择区域面 (1055)
              </StepBar>
              <StepBtn $on><Ico n="regionFace" s={24} /></StepBtn>
            </StepRow>
            <StepRow>搜索区域<StepBtn><Ico n="trapez" s={22} /></StepBtn></StepRow>
          </SecBody>
          <Section title="设置" />
          <SecBody $h={60} $pad="6px 8px 0">
            <CheckRow><CheckBox />创建区域</CheckRow>
            <CheckRow><CheckBox />创建分型线</CheckRow>
          </SecBody>
          <Section title="面属性" />
          <SecBody $h={153}>
            <ColorRow>颜色<Swatch /></ColorRow>
            <GroupBox>
              <GroupTitle>透明度选项</GroupTitle>
              <RadioRow>
                <Radio><RadioDot />选定的面</Radio>
                <Radio><RadioDot $on />其他面</Radio>
              </RadioRow>
            </GroupBox>
            <SliderValue>0</SliderValue>
            <SliderBox><Thumb /></SliderBox>
            <SliderEnds><span>0</span><span>100</span></SliderEnds>
          </SecBody>
          <ActionRow>
            <ActionBtn>确定</ActionBtn>
            <ActionBtn $primary>应用</ActionBtn>
            <ActionBtn>取消</ActionBtn>
          </ActionRow>
          <BlackBar />
          <HScroll $pl={20} $pr={38} $h={20} style={{ border: "1px solid #8a8a8a", borderTop: 0, marginTop: 2 }}>
            <ScrollEnd $side="left" $at={7} />
            <ScrollThumb>|||</ScrollThumb>
            <ScrollEnd $side="right" $at={26} />
          </HScroll>
          <LowerSash><SashGrip /></LowerSash>
          <Section title="相关性" up={false} mt={2} />
          <Section title="细节" up={false} mt={1} />
          <Section title="预览" up={false} mt={1} />
        </Dialog>

        <Resource>
          <ResGroup $h={188} $pt={13}>
            <ResDots />
            <ResItem><Ico n="ruled" s={24} /><ResLabel>直纹</ResLabel></ResItem>
            <ResItem><Ico n="bridgeS" s={24} /><ResLabel>桥接</ResLabel></ResItem>
            <ResItem><Ico n="nsided" s={24} /><ResLabel>N 边曲面</ResLabel></ResItem>
          </ResGroup>
          <ResGroup $h={64} $pt={5}>
            <ResItem><Ico n="offS" s={26} /><ResLabel>偏置曲面</ResLabel></ResItem>
          </ResGroup>
          <ResGroup $h={135} $pt={5}>
            <ResItem $h={59}><Ico n="trimS" s={28} /><ResLabel>修剪的片体</ResLabel></ResItem>
            <ResItem><Ico n="trimE" s={28} /><ResLabel>修剪和延伸</ResLabel></ResItem>
            <ResArrow />
          </ResGroup>
          <ResGroup $h={81} $pt={12}>
            <ResDots />
            <ResItem><Ico n="removeP" s={26} /><ResLabel>移除参数</ResLabel></ResItem>
            <ResArrow />
          </ResGroup>
        </Resource>

        <Viewport>
          <Scene width="1476" height="766" viewBox="440 271 1476 766">
            <polygon points="562,378 1292,433 1269,956 540,902" fill={sky} stroke="#333" strokeWidth="2" />
            <PartModel />
            <path d="M495 983V955" stroke="#e02a2a" strokeWidth="2" />
            <path d="M495 982l28 3" stroke="#18d080" strokeWidth="2" />
            <path d="M495 983l-6 4" stroke="#2a5ae0" strokeWidth="2" />
            <rect x="492" y="980" width="6" height="6" fill="#aaa" />
            <text x="494" y="952" fill="#e02a2a" fontSize="8" fontFamily="Liberation Mono">X</text>
            <text x="528" y="988" fill="#18d080" fontSize="8" fontFamily="Liberation Mono">Y</text>
            <text x="484" y="991" fill="#2a5ae0" fontSize="8" fontFamily="Liberation Mono">Z</text>
          </Scene>
        </Viewport>
      </Main>

      <WhiteLine />
      <Taskbar>
        <Orb><Pane $c="#e8552a" /><Pane $c="#6db33f" /><Pane $c="#2a82d8" /><Pane $c="#f2c12e" /></Orb>
        <TaskBtn $on $pl={8}><Ico n="nx" s={32} />NX 6 - Modelin...</TaskBtn>
        <TaskBtn $pl={8} $gap={2}><Ico n="folderTb" s={32} />colinxin</TaskBtn>
        <TaskBtn $pl={8}><Ico n="ie" s={30} />发表帖子 - 塑料...</TaskBtn>
        <TaskBtn $pl={8}><Ico n="player" s={32} />专用播放器</TaskBtn>
        <TaskBtn $pl={9} $bright><Ico n="photo" s={30} />U~%(3GS_Y%14...</TaskBtn>
        <Tray>CH<Ico n="keyboard" s={18} /></Tray>
      </Taskbar>

      <Watermark>
        <svg width="92" height="92" viewBox="0 0 100 100">
          <polygon points="50,2 92,26 92,74 50,98 8,74 8,26" fill="#3ea4ec" />
          <path d="M50 2L92 26 70 42C66 26 58 18 30 14zM8 74L8 26 34 46C28 60 30 76 50 98z" fill="#2680c8" />
          <path d="M8 26C30 20 60 28 68 34M92 74C70 80 40 72 32 66M30 14C40 34 34 58 8 74M70 86C60 66 66 42 92 26" stroke="#a8d4f4" strokeWidth="1" fill="none" />
          <polygon points="50,22 74,36 74,64 50,78 26,64 26,36" fill="#fff" />
          <polygon points="50,30 67,40 50,50 33,40" fill="#3e9be0" />
          <polygon points="33,42 49,51 49,70 33,60" fill="#2a78c0" />
          <polygon points="67,42 51,51 51,70 67,60" fill="#3288d0" />
        </svg>
        <WmText>
          <WmTitle>3D世界网</WmTitle>
          <WmUrl>WWW.3DSJW.COM</WmUrl>
        </WmText>
      </Watermark>
    </Screen>
  );
}
